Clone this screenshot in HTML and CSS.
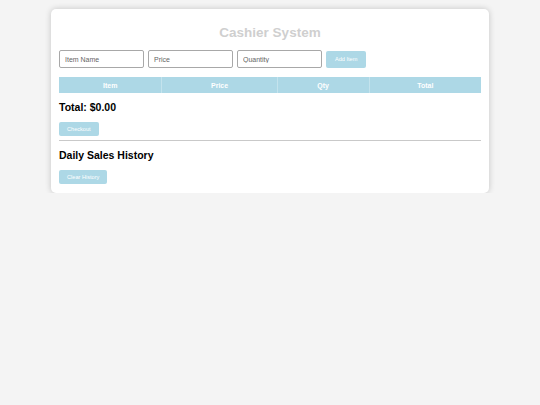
FILE: index.html
```html
<!DOCTYPE html>
<html lang="en">
<head>
  <meta charset="UTF-8">
  <title>Cashier System</title>
  <link rel="stylesheet" href="styles.css">
</head>
<body>
  <div class="container">
    <h1>Cashier System</h1>

    <div class="entry">
      <input type="text" id="itemName" placeholder="Item Name">
      <input type="number" id="itemPrice" placeholder="Price">
      <input type="number" id="itemQty" placeholder="Quantity">
      <button class="btn add-btn" id="addBtn">Add Item</button>
    </div>

    <table class="cart">
      <thead>
        <tr>
          <th class="col-item">Item</th>
          <th class="col-price">Price</th>
          <th class="col-qty">Qty</th>
          <th class="col-total">Total</th>
        </tr>
      </thead>
      <tbody id="cartBody"></tbody>
    </table>

    <h3 class="total">Total: $<span id="totalAmount">0.00</span></h3>
    <button class="btn" id="checkoutBtn">Checkout</button>

    <hr>

    <h2 class="history-title">Daily Sales History</h2>
    <div id="historyList"></div>
    <button class="btn" id="clearBtn">Clear History</button>
  </div>
</body>
</html>
```

FILE: styles.css
```css
body {
  margin: 0;
  padding-top: 9px;
  background-color: #f4f4f4;
  font-family: "Liberation Sans", Arial, sans-serif;
}
.container {
  width: 422px;
  margin: 0 auto;
  padding: 8px 8px 9px;
  background: #fff;
  border-radius: 5px;
  box-shadow: 0 0 6px rgba(0,0,0,0.2);
}
h1 {
  margin: 8px 0 9px;
  font-size: 13.5px;
  line-height: 16px;
  text-align: center;
  color: #cfcfcf;
}
.entry {
  display: flex;
  align-items: center;
  gap: 4px;
}
.entry input {
  box-sizing: border-box;
  width: 85px;
  height: 18px;
  margin: 0;
  padding: 0 5px;
  font-family: inherit;
  font-size: 7px;
  border: 1px solid #a8a8a8;
  border-radius: 2px;
  outline: none;
}
.entry input::placeholder { color: #666; }
.entry input::-webkit-outer-spin-button,
.entry input::-webkit-inner-spin-button { -webkit-appearance: none; margin: 0; }
.btn {
  display: block;
  height: 14px;
  padding: 0 8px;
  font-family: inherit;
  font-size: 5.6px;
  color: #fff;
  background-color: #add8e6;
  border: none;
  border-radius: 2px;
  cursor: pointer;
}
.add-btn {
  height: 17px;
  padding: 0 9px;
}
.cart {
  width: 100%;
  margin-top: 9px;
  border-collapse: collapse;
}
.cart th {
  height: 16px;
  padding: 0;
  font-size: 7px;
  color: #fff;
  background-color: #add8e6;
  border-left: 1px solid #c4e3ed;
}
.cart th:first-child { border-left: none; }
.col-item { width: 24.4%; }
.col-price { width: 27.3%; }
.col-qty { width: 21.8%; }
.col-total { width: 26.5%; }
.total {
  margin: 8px 0 9px;
  font-size: 10.5px;
  line-height: 12px;
}
hr {
  margin: 4px 0 8px;
  border: none;
  border-top: 1px solid #c9c9c9;
}
.history-title {
  margin: 0 0 9px;
  font-size: 10.5px;
  line-height: 12px;
}
#historyList:empty { display: none; }
```
